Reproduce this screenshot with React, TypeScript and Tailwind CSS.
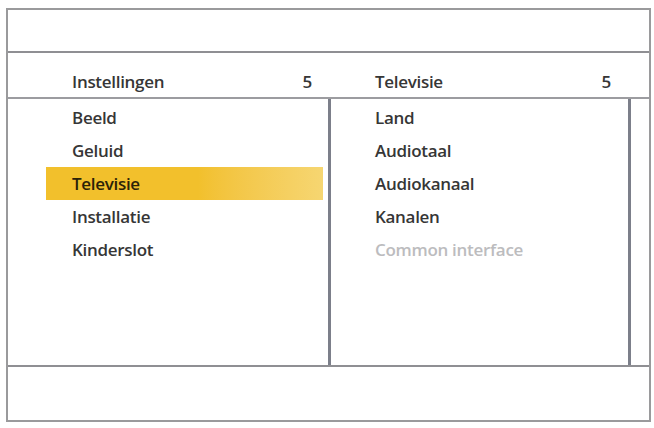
const leftItems = ['Beeld', 'Geluid', 'Televisie', 'Installatie', 'Kinderslot'];
const rightItems = [
  { label: 'Land', disabled: false },
  { label: 'Audiotaal', disabled: false },
  { label: 'Audiokanaal', disabled: false },
  { label: 'Kanalen', disabled: false },
  { label: 'Common interface', disabled: true },
];

export default function App() {
  return (
    <div
      className="w-[654px] h-[428px] bg-white pt-[8px] pl-[6px]"
      style={{ fontFamily: '"Open Sans", "Liberation Sans", sans-serif' }}
    >
      <div className="w-[645px] h-[414px] border-2 border-[#9a9a9c] flex flex-col">
        {/* top band */}
        <div className="h-[43px] shrink-0 border-b-2 border-[#8f8f93]" />

        {/* column headers */}
        <div className="h-[46px] shrink-0 flex items-end pb-[3px] border-b-2 border-[#9c9ca0] text-[17px] font-semibold text-[#363636] tracking-[-0.3px]">
          <div className="w-[320px] flex justify-between pl-[64px] pr-[16px]">
            <span>Instellingen</span>
            <span>5</span>
          </div>
          <div className="w-[300px] flex justify-between pl-[47px] pr-[17px]">
            <span>Televisie</span>
            <span>5</span>
          </div>
        </div>

        {/* lists */}
        <div className="flex-1 flex border-b-2 border-[#8f8f93]">
          <div className="w-[320px] shrink-0 pl-[38px] pr-[5px] pt-[2px]">
            {leftItems.map((item) => (
              <div
                key={item}
                className={`h-[33px] flex items-center pl-[26px] text-[17px] font-semibold tracking-[-0.3px] ${
                  item === 'Televisie'
                    ? 'bg-gradient-to-r from-[#f2c02c] from-55% to-[#f6d671] text-[#2b2208]'
                    : 'text-[#363636]'
                }`}
              >
                {item}
              </div>
            ))}
          </div>
          <div className="w-[3px] shrink-0 bg-[#7c7f8a]" />
          <div className="w-[297px] shrink-0 pl-[44px] pt-[2px]">
            {rightItems.map((item) => (
              <div
                key={item.label}
                className={`h-[33px] flex items-center text-[17px] font-semibold tracking-[-0.3px] ${
                  item.disabled ? 'text-[#bcbcbe]' : 'text-[#363636]'
                }`}
              >
                {item.label}
              </div>
            ))}
          </div>
          <div className="w-[3px] shrink-0 bg-[#7c7f8a]" />
          <div className="flex-1" />
        </div>

        {/* bottom band */}
        <div className="h-[53px] shrink-0" />
      </div>
    </div>
  );
}
